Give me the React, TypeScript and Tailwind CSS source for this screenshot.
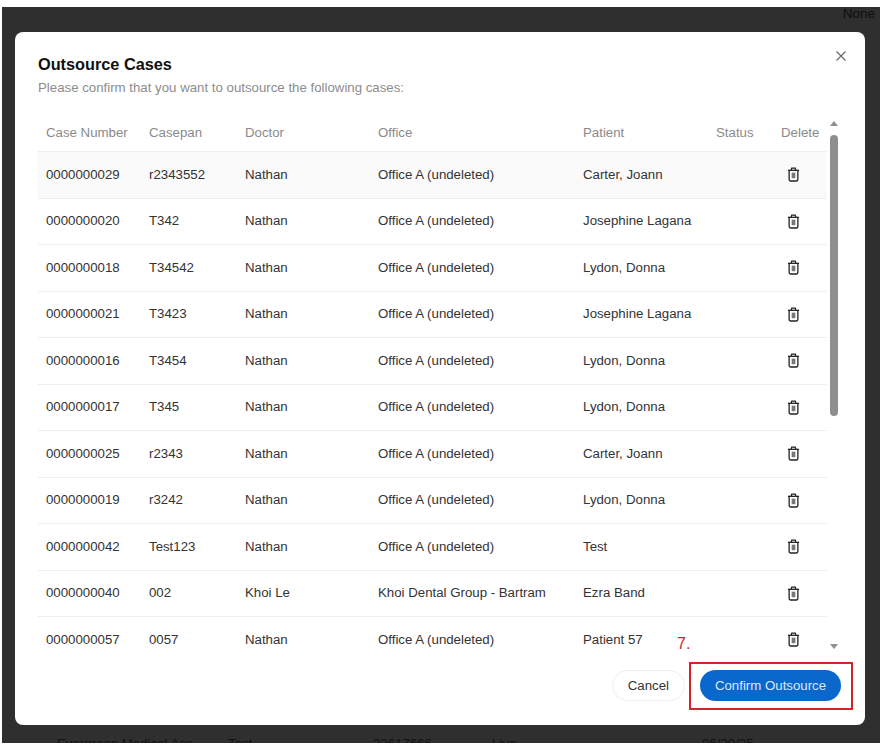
const rows = [
  ['0000000029', 'r2343552', 'Nathan', 'Office A (undeleted)', 'Carter, Joann'],
  ['0000000020', 'T342', 'Nathan', 'Office A (undeleted)', 'Josephine Lagana'],
  ['0000000018', 'T34542', 'Nathan', 'Office A (undeleted)', 'Lydon, Donna'],
  ['0000000021', 'T3423', 'Nathan', 'Office A (undeleted)', 'Josephine Lagana'],
  ['0000000016', 'T3454', 'Nathan', 'Office A (undeleted)', 'Lydon, Donna'],
  ['0000000017', 'T345', 'Nathan', 'Office A (undeleted)', 'Lydon, Donna'],
  ['0000000025', 'r2343', 'Nathan', 'Office A (undeleted)', 'Carter, Joann'],
  ['0000000019', 'r3242', 'Nathan', 'Office A (undeleted)', 'Lydon, Donna'],
  ['0000000042', 'Test123', 'Nathan', 'Office A (undeleted)', 'Test'],
  ['0000000040', '002', 'Khoi Le', 'Khoi Dental Group - Bartram', 'Ezra Band'],
  ['0000000057', '0057', 'Nathan', 'Office A (undeleted)', 'Patient 57'],
];

const gridCols = 'grid grid-cols-[103px_96px_133px_205px_133px_65px_54px]';

const TrashIcon = () => (
  <svg width="13" height="15" viewBox="0 0 14 16" fill="none" stroke="#222" strokeWidth="1.4">
    <path d="M1 3.5h12" />
    <path d="M4.5 3.2l.6-2h3.8l.6 2" />
    <path d="M2.3 3.5v10a1.5 1.5 0 0 0 1.5 1.5h6.4a1.5 1.5 0 0 0 1.5-1.5v-10" />
    <rect x="5" y="6" width="4" height="6" fill="#777" stroke="none" />
  </svg>
);

const App = () => {
  return (
    <div className="w-[886px] h-[748px] bg-white pl-[2px] pr-[6px] pt-[7px] pb-[5px] font-['Liberation_Sans',Arial,sans-serif] overflow-hidden">
      <div className="relative h-full bg-[#2f2f2f] overflow-hidden text-[13.25px] text-[#0d0d0d]">
        <div className="flex justify-end pr-[5px] text-[13.5px] leading-[14px]">None</div>

        {/* table behind the dialog, only the bottom edge shows */}
        <div className="absolute top-[729px] left-[55px] flex text-[#111] leading-[15px]">
          <span className="w-[171px]">Evergreen Medical Ass</span>
          <span className="w-[145px]">Test</span>
          <span className="w-[119px]">22617666</span>
          <span className="w-[210px]">Live</span>
          <span>06/20/25</span>
        </div>

        <div className="absolute left-[13px] top-[25px] w-[850px] h-[693px] bg-white rounded-lg flex flex-col">
          <button className="absolute right-[19px] top-[19px] text-[#666]">
            <svg width="10" height="10" viewBox="0 0 10 10" stroke="currentColor" strokeWidth="1.1">
              <path d="M0.5 0.5l9 9M9.5 0.5l-9 9" />
            </svg>
          </button>

          <div className="pl-[23px] pt-[22px]">
            <h2 className="text-[16.3px] leading-[20px] font-bold text-[#111]">Outsource Cases</h2>
            <p className="mt-[7px] text-[13.25px] leading-[14px] text-[#8c8c8c] scale-y-95 origin-left">
              Please confirm that you want to outsource the following cases:
            </p>
          </div>

          <div className="flex-1 min-h-0 flex pl-[23px] mt-[19px] overflow-hidden">
            <div className="w-[789px]">
              <div className={`${gridCols} h-[38px] items-center text-[#8a8a8a] border-b border-[#eeeeee]`}>
                {['Case Number', 'Casepan', 'Doctor', 'Office', 'Patient', 'Status', 'Delete'].map((h) => (
                  <div key={h} className="pl-2 whitespace-nowrap">{h}</div>
                ))}
              </div>
              {rows.map((row, i) => (
                <div
                  key={row[0]}
                  className={`${gridCols} h-[46.5px] items-center border-b border-[#eeeeee] text-[#333] ${i === 0 ? 'bg-[#fafafa]' : ''}`}
                >
                  {row.map((cell, j) => (
                    <div key={j} className="pl-2 whitespace-nowrap">{cell}</div>
                  ))}
                  <div />
                  <div className="flex justify-center pr-[14px]"><TrashIcon /></div>
                </div>
              ))}
            </div>

            <div className="w-[12px] ml-[1px] flex flex-col items-center pt-[7px] pb-[6px] h-[541px]">
              <div className="w-0 h-0 border-x-[4px] border-x-transparent border-b-[5px] border-b-[#8f8f8f]" />
              <div className="w-[8px] h-[281px] mt-[9px] rounded-full bg-[#8f8f8f]" />
              <div className="mt-auto w-0 h-0 border-x-[4px] border-x-transparent border-t-[5px] border-t-[#8f8f8f]" />
            </div>
          </div>

          <div className="h-[63px] flex items-start justify-end gap-[15px] pr-[24px] pt-[8px]">
            <button className="h-[31px] px-[15px] rounded-full border border-[#eeeeee] bg-white text-[13.25px] text-[#333]">Cancel</button>
            <button className="h-[31px] w-[141px] rounded-full bg-[#0a68cc] text-[13.25px] text-[#dbeaff]">Confirm Outsource</button>
          </div>

          {/* annotation drawn on top of the screenshot */}
          <span className="absolute left-[662px] top-[603px] text-[16px] leading-[18px] text-[#c8272c]">7.</span>
          <div className="absolute left-[674px] top-[630px] w-[164px] h-[48px] border-2 border-[#d5232a]" />
        </div>
      </div>
    </div>
  );
};

export default App;
